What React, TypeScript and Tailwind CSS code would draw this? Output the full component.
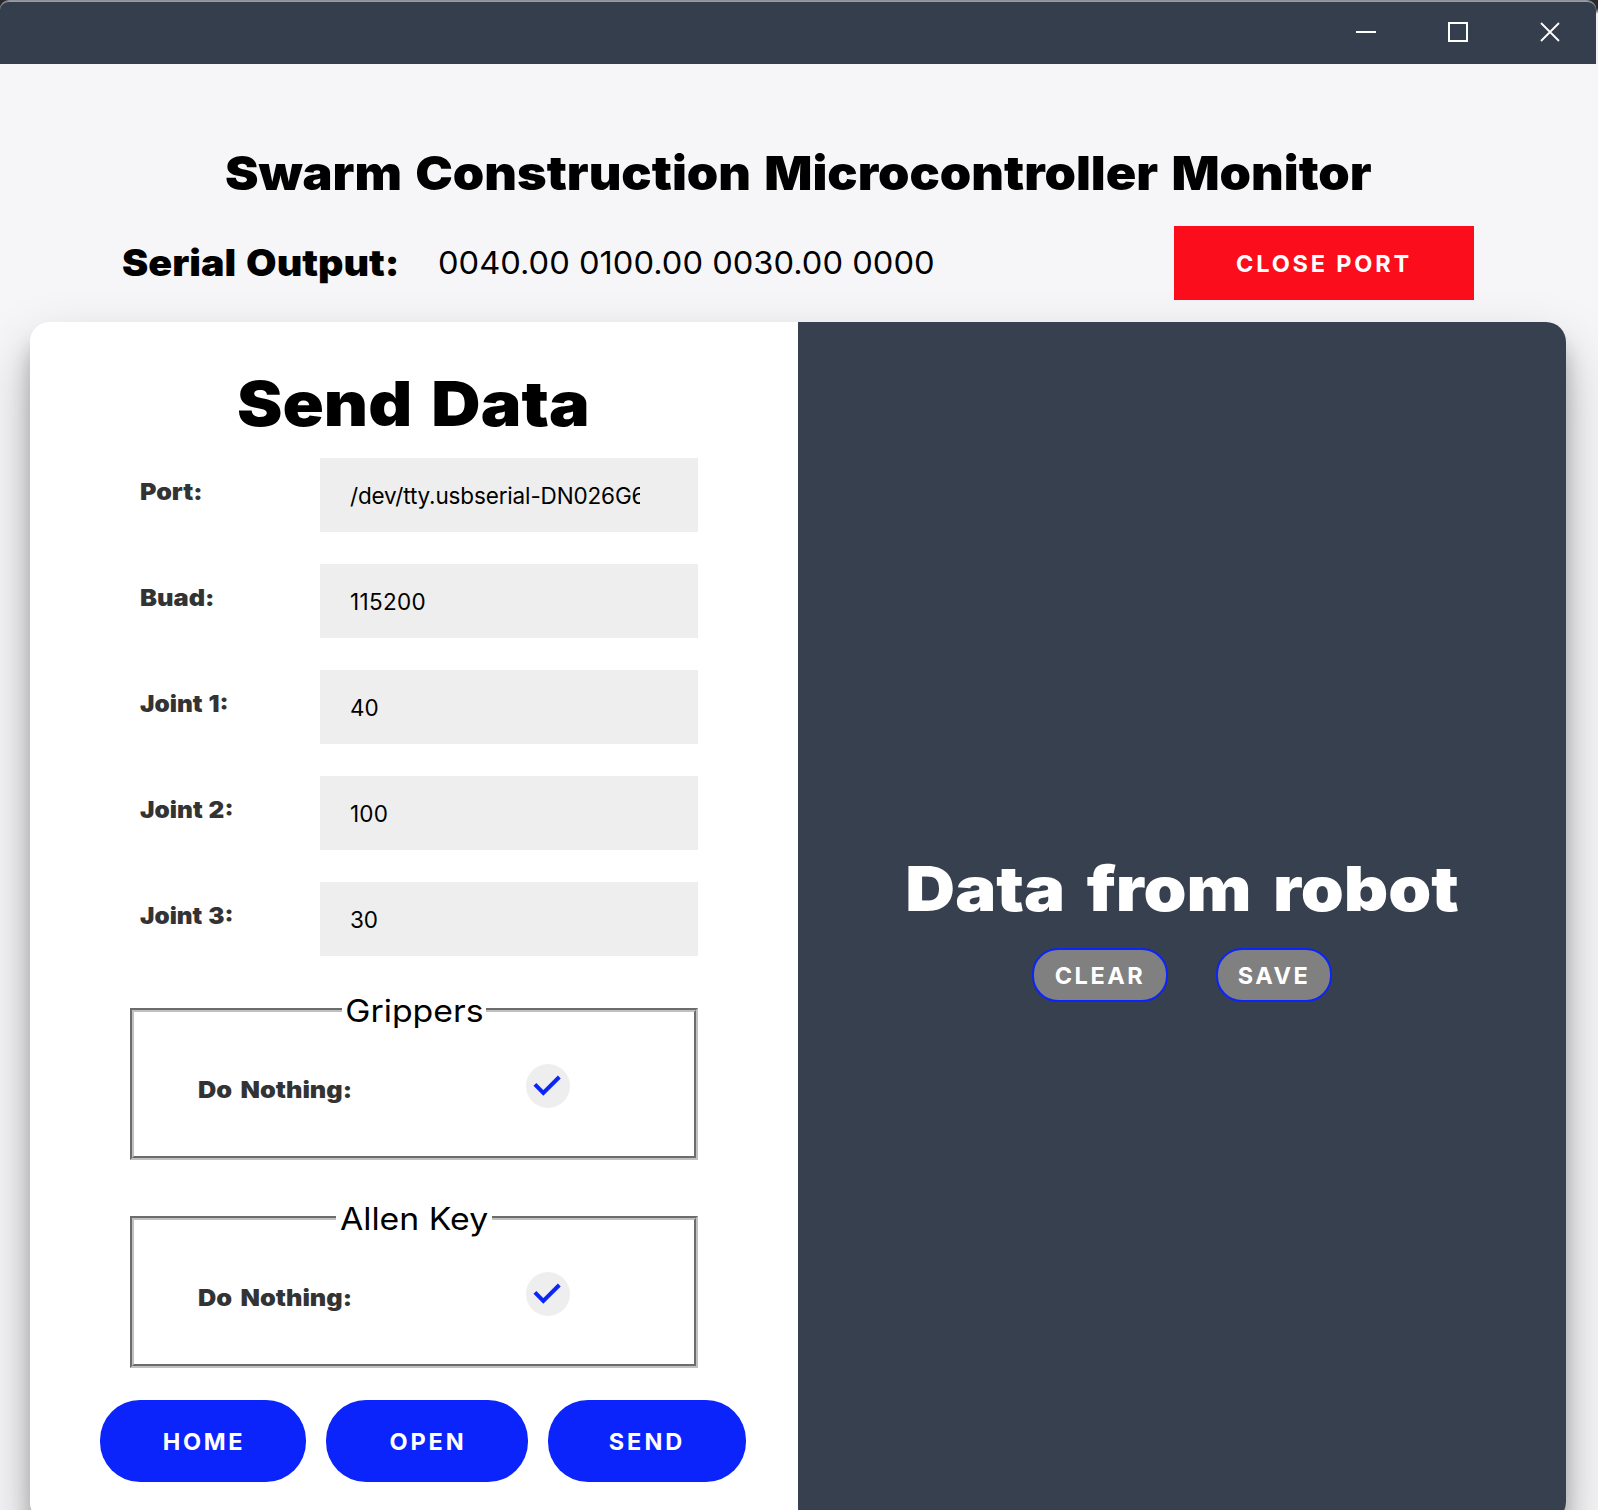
import type { ReactNode } from "react";

const fields = [
  { label: "Port:", value: "/dev/tty.usbserial-DN026G6", stretch: "scale-x-[1.09]", track: "tracking-[-0.15px]" },
  { label: "Buad:", value: "115200", stretch: "scale-x-[1.105]", track: "tracking-[0.3px]" },
  { label: "Joint 1:", value: "40", stretch: "scale-x-[1.06]", track: "tracking-[-0.1px]" },
  { label: "Joint 2:", value: "100", stretch: "scale-x-[1.062]", track: "tracking-[0.2px]" },
  { label: "Joint 3:", value: "30", stretch: "scale-x-[1.056]", track: "tracking-[-0.1px]" },
];

function TitleBar() {
  return (
    <div className="h-16 w-full bg-linear-to-b from-[#2a2a2d] from-[8px] to-[#f0f0f2] to-[14px]">
      <header className="flex h-16 w-[1596px] items-center justify-end rounded-t-[9px] border-t border-[#8f9196] bg-[#353e4c] pr-9 pb-px shadow-[inset_0_1px_0_#9a9da3]">
        <svg className="mb-px h-5 w-[204px]" viewBox="0 0 204 20" fill="none" stroke="#ffffff" strokeWidth="2">
          <path d="M0 10H20" />
          <rect x="93" y="1" width="18" height="18" />
          <path d="M185 1L203 19M203 1L185 19" strokeWidth="1.8" />
        </svg>
      </header>
    </div>
  );
}

function Check() {
  return (
    <span className="block size-11 rounded-full bg-[#eeeeee]">
      <svg viewBox="0 0 44 44" className="size-11" fill="none" stroke="#0b24fb" strokeWidth="4">
        <path d="M8.9 20.4L17.3 29L33.3 13" />
      </svg>
    </span>
  );
}

function Group({ title, width, className }: { title: string; width: string; className: string }) {
  return (
    <fieldset className={`ml-[100px] block h-[170px] w-[568px] border-4 border-[#c0c0c0] [border-style:groove] ${className}`}>
      <legend className={`mx-auto h-10 text-center text-[31px] leading-10 whitespace-nowrap text-black ${width}`}>
        <span className="inline-block scale-x-[1.09] pt-px">{title}</span>
      </legend>
      <div className="flex pt-[34px] pl-16">
        <div className="w-[328px] pt-2">
          <span className="block w-max origin-left scale-x-[1.1] text-[23px] leading-[37px] font-black text-[#333333] [word-spacing:3px]">
            Do Nothing:
          </span>
        </div>
        <Check />
      </div>
    </fieldset>
  );
}

function ActionButton({ children, className }: { children: ReactNode; className: string }) {
  return (
    <button className={`h-[82px] rounded-[40px] bg-[#0b24fb] pt-0.5 text-[23.5px] font-bold text-white ${className}`}>
      {children}
    </button>
  );
}

export default function App() {
  return (
    <div className="h-[1510px] w-full overflow-hidden bg-[#f6f6f8] font-['Inter',sans-serif] text-black">
      <TitleBar />
      <h1 className="mt-[79px] ml-[224.5px] w-max origin-left scale-x-[1.072] text-[47px] leading-[60px] font-black whitespace-nowrap [word-spacing:3px]">
        Swarm Construction Microcontroller Monitor
      </h1>
      <div className="mt-[23px] flex h-[74px] items-center pr-[124px] pl-[122px]">
        <div className="w-[316px]">
          <h2 className="w-max origin-left scale-x-[1.086] text-[36.3px] leading-[74px] font-black [word-spacing:2px]">
            Serial Output:
          </h2>
        </div>
        <div className="flex-1">
          <p className="w-max origin-left scale-x-[1.053] text-[31px] leading-[72px]">0040.00 0100.00 0030.00 0000</p>
        </div>
        <button className="h-[74px] w-[300px] bg-[#fc0d1b] pt-0.5 text-[23.5px] font-bold tracking-[2.8px] text-white">
          CLOSE PORT
        </button>
      </div>

      <main className="mt-[22px] ml-[30px] flex h-[1200px] w-[1536px] overflow-hidden rounded-[20px] shadow-[0_28px_56px_rgba(0,0,0,0.25),0_20px_20px_rgba(0,0,0,0.22)]">
        <section className="w-1/2 bg-white pt-[52px]">
          <h2 className="ml-[207px] w-max origin-left scale-x-[1.101] text-[62px] leading-[60px] font-black [word-spacing:5px]">
            Send Data
          </h2>
          <div className="mt-6 flex flex-col gap-8 pl-[110px]">
            {fields.map((f) => (
              <label key={f.label} className="flex h-[74px]">
                <span className="w-[180px]">
                  <span
                    className={`block w-max origin-left text-[23px] leading-[69px] font-black text-[#333333] [word-spacing:1px] ${f.stretch}`}
                  >
                    {f.label}
                  </span>
                </span>
                <input
                  readOnly
                  value={f.value}
                  className={`h-[74px] w-[378px] bg-[#eeeeee] pt-px pr-[58px] pl-[30px] text-[22.5px] outline-none ${f.track}`}
                />
              </label>
            ))}
          </div>
          <Group title="Grippers" width="w-[144px]" className="mt-[34px]" />
          <Group title="Allen Key" width="w-[156px]" className="mt-[38px]" />
          <div className="mt-8 flex gap-5 pl-[70px]">
            <ActionButton className="w-[206px] pl-0.5 tracking-[2.7px]">HOME</ActionButton>
            <ActionButton className="w-[202px] pl-0.5 tracking-[2.9px]">OPEN</ActionButton>
            <ActionButton className="w-[198px] tracking-[3px]">SEND</ActionButton>
          </div>
        </section>

        <section className="flex w-1/2 flex-col items-center bg-[#37404e] pt-[537px] text-white">
          <h2 className="ml-px scale-x-[1.111] text-[62px] leading-[60px] font-black whitespace-nowrap [word-spacing:7px]">
            Data from robot
          </h2>
          <div className="mt-[29px] flex gap-12">
            <button className="h-[54px] w-[136px] rounded-[26px] border-2 border-[#0b24fb] bg-[#808080] pt-0.5 text-[23.5px] font-bold tracking-[2.55px]">
              CLEAR
            </button>
            <button className="h-[54px] w-[116px] rounded-[26px] border-2 border-[#0b24fb] bg-[#808080] pt-0.5 text-[23.5px] font-bold tracking-[2.5px]">
              SAVE
            </button>
          </div>
        </section>
      </main>
    </div>
  );
}
